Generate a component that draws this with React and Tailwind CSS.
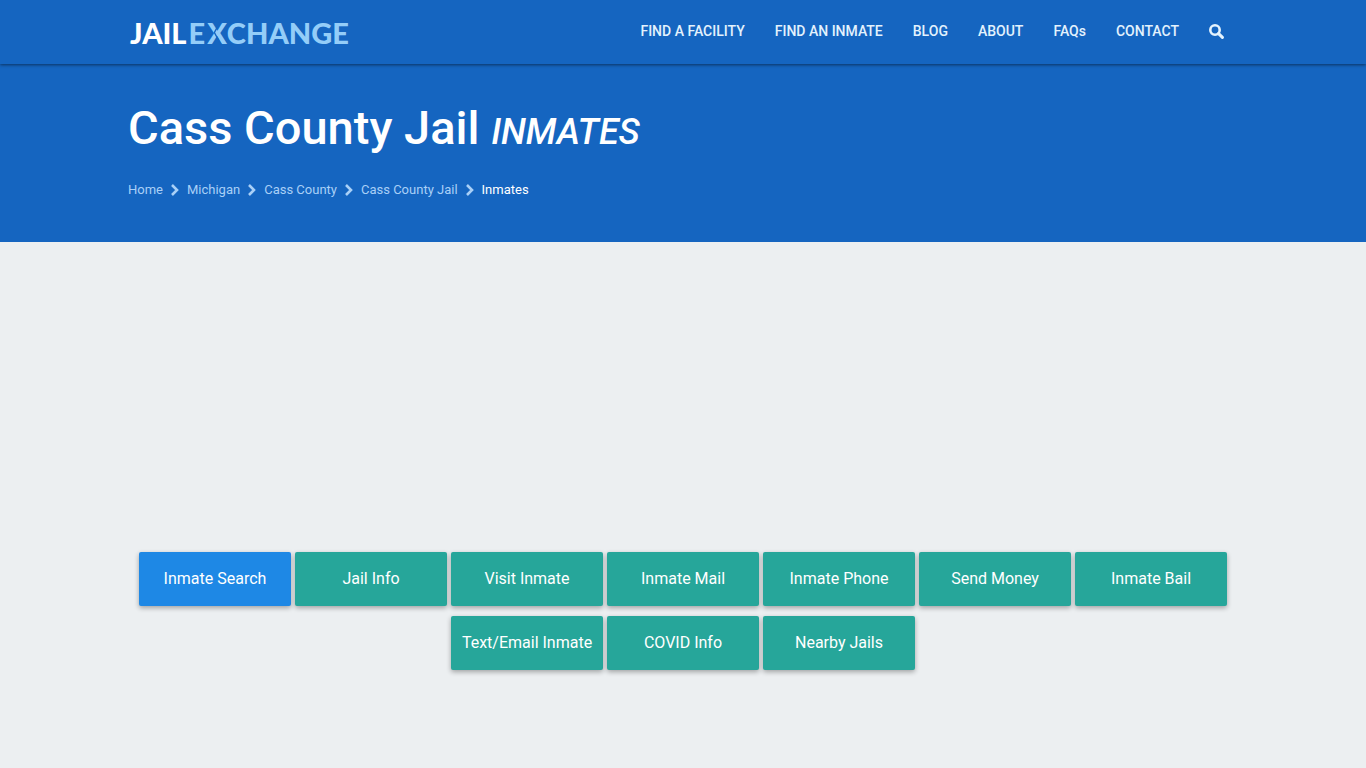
import { Fragment } from 'react';

const navLinks = ['FIND A FACILITY', 'FIND AN INMATE', 'BLOG', 'ABOUT', 'FAQs', 'CONTACT'];

const crumbs = ['Home', 'Michigan', 'Cass County', 'Cass County Jail'];

const sections = [
  'Inmate Search',
  'Jail Info',
  'Visit Inmate',
  'Inmate Mail',
  'Inmate Phone',
  'Send Money',
  'Inmate Bail',
  'Text/Email Inmate',
  'COVID Info',
  'Nearby Jails',
];

function ChevronIcon() {
  return (
    <svg width="8" height="12" viewBox="0 0 8 12" fill="none" stroke="currentColor" strokeWidth="2.6" aria-hidden="true">
      <path d="M1 1l5 5-5 5" />
    </svg>
  );
}

function SearchIcon() {
  return (
    <svg width="15" height="15" viewBox="0 0 15 15" fill="none" stroke="currentColor" aria-hidden="true">
      <circle cx="6" cy="6" r="4.7" strokeWidth="2.6" />
      <path d="M9.6 9.6l3.8 3.8" strokeWidth="3" strokeLinecap="round" />
    </svg>
  );
}

function Logo() {
  return (
    <a
      href="#"
      aria-label="Jail Exchange"
      className="flex gap-0.5 pt-0.5 pl-0.5 font-[Lato,sans-serif] text-[29px] leading-8 font-black text-white"
    >
      <span>JAIL</span>
      <span className="text-[#94cdf8]">
        E
        <span className="relative ml-0.5">
          X
          {/* slit between the two strokes of the X */}
          <svg
            className="absolute inset-0 h-full w-full"
            viewBox="0 0 20 32"
            fill="none"
            stroke="#1565c0"
            strokeWidth="1.4"
            aria-hidden="true"
          >
            <path d="M14 4L7.500 16L14 28" />
          </svg>
        </span>
        CHANGE
      </span>
    </a>
  );
}

function Header() {
  return (
    <header className="relative bg-[#1565c0] shadow-[0_1px_3px_rgba(0,0,0,0.5)]">
      <div className="mx-auto flex h-16 max-w-[1110px] items-center justify-between pr-[14px]">
        <Logo />
        <nav className="flex items-center gap-[30px] pb-0.5 text-sm font-medium text-[#e3f2fd]">
          {navLinks.map((label) => (
            <a key={label} href="#">{label}</a>
          ))}
          <a href="#" aria-label="Search">
            <SearchIcon />
          </a>
        </nav>
      </div>
    </header>
  );
}

function Banner() {
  return (
    <div className="bg-[#1565c0]">
      <div className="mx-auto max-w-[1110px] pt-8 pb-[42px]">
        <h1 className="text-[47px] leading-16 font-medium text-white">
          Cass County Jail <em className="text-4xl">INMATES</em>
        </h1>
        <nav aria-label="Breadcrumb" className="mt-5 flex items-center gap-2 text-[13px] leading-5 text-[#a9d0f7]">
          {crumbs.map((label) => (
            <Fragment key={label}>
              <a href="#">{label}</a>
              <ChevronIcon />
            </Fragment>
          ))}
          <span className="text-white">Inmates</span>
        </nav>
      </div>
    </div>
  );
}

function SectionLink({ label, active }) {
  return (
    <a
      href="#"
      className={`flex h-[54px] w-[152px] items-center justify-center rounded-xs text-base text-white shadow-[0_2px_5px_rgba(0,0,0,0.32)] ${
        active ? 'bg-[#1e88e5]' : 'bg-[#26a69a]'
      }`}
    >
      {label}
    </a>
  );
}

export default function App() {
  return (
    <div className="min-h-screen bg-[#eceff1] font-[Roboto,sans-serif]">
      <Header />
      <Banner />
      <main className="mx-auto max-w-[1110px] pt-[310px] pb-24">
        <div className="flex flex-wrap justify-center gap-x-1 gap-y-[10px]">
          {sections.map((label, i) => (
            <SectionLink key={label} label={label} active={i === 0} />
          ))}
        </div>
      </main>
    </div>
  );
}
